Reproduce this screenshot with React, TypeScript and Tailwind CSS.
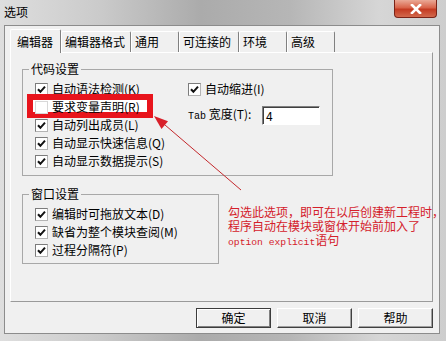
import React from "react";

const CJK = "font-['Noto_Sans_CJK_SC',sans-serif]";

const TABS = [
  { label: "编辑器", w: "w-[51px]" },
  { label: "编辑器格式", w: "w-[70px]" },
  { label: "通用", w: "w-[48px]" },
  { label: "可连接的", w: "w-[60px]" },
  { label: "环境", w: "w-[48px]" },
  { label: "高级", w: "w-[48px]" },
];

function Check({ checked = true, faint = false }: { checked?: boolean; faint?: boolean }) {
  return (
    <span
      className={`flex h-[13px] w-[13px] shrink-0 items-center justify-center border bg-white ${
        faint
          ? "border-[#d8d8d8]"
          : "border-t-[#7c7c7c] border-l-[#7c7c7c] border-r-[#b4b4b4] border-b-[#b4b4b4]"
      }`}
    >
      {checked && (
        <svg width="9" height="9" viewBox="0 0 9 9">
          <path d="M1 4.2 L3.4 6.8 L8 1.6" fill="none" stroke="#111" strokeWidth="2" />
        </svg>
      )}
    </span>
  );
}

function Row({ label, checked = true, faint = false, lift = false }: { label: string; checked?: boolean; faint?: boolean; lift?: boolean }) {
  return (
    <div className={`flex h-[18px] items-center gap-[4px] ${lift ? "relative z-[2]" : ""}`}>
      <Check checked={checked} faint={faint} />
      <span className="whitespace-nowrap text-[12px] leading-[14px]">{label}</span>
    </div>
  );
}

function Btn({ label, primary = false }: { label: string; primary?: boolean }) {
  return (
    <button
      type="button"
      className={`flex h-[20px] w-[75px] items-center justify-center border text-[12px] leading-[14px] ${
        primary
          ? "border-[#3c3c3c] bg-[#f0f0f0] shadow-[inset_1px_1px_0_#ffffff,inset_-1px_-1px_0_#808080]"
          : "border-t-white border-l-white border-r-[#404040] border-b-[#404040] bg-[#f0f0f0] shadow-[inset_-1px_-1px_0_#a0a0a0]"
      }`}
    >
      {label}
    </button>
  );
}

export default function App() {
  return (
    <div
      className={`relative flex h-[341px] w-[446px] flex-col overflow-hidden bg-[linear-gradient(90deg,#dedede_0%,#cbcbcb_22%,#ababab_45%,#b6b6b6_65%,#d6d6d6_85%,#cdcdcd_100%)] text-black ${CJK}`}
    >
      {/* title bar */}
      <div className="flex h-[25px] shrink-0 items-start">
        <span className="ml-[4px] mt-[5px] text-[12px] leading-[14px]">选项</span>
        <button
          type="button"
          className="ml-auto mr-[9px] flex h-[18px] w-[43px] items-center justify-center rounded-b-[4px] border border-t-0 border-[#7a2317] bg-[linear-gradient(180deg,#eaa996_0%,#d9644a_45%,#c43b22_55%,#d2694d_100%)]"
        >
          <svg width="12" height="10" viewBox="0 0 12 10">
            <path d="M2 1 L10 9 M10 1 L2 9" stroke="#fff" strokeWidth="2.6" strokeLinecap="square" />
          </svg>
        </button>
      </div>

      {/* client area */}
      <div className="mb-[7px] ml-[4px] mr-[6px] flex flex-1 flex-col border border-[#8c8c8c] bg-[#f0f0f0]">
        {/* tabs */}
        <div className="relative z-10 -mb-[1px] ml-[5px] mt-[3px] flex h-[24px] items-end">
          {TABS.map((t, i) => (
            <div
              key={t.label}
              className={`flex shrink-0 items-center rounded-t-[2px] border border-b-0 border-t-white border-l-white border-r-[#808080] bg-[#f0f0f0] text-[12px] leading-[14px] ${t.w} ${
                i === 0 ? "h-[24px] pl-[6px]" : "mb-[1px] h-[21px] pl-[3px]"
              }`}
            >
              {t.label}
            </div>
          ))}
        </div>

        {/* tab page */}
        <div className="ml-[5px] h-[250px] w-[423px] border border-t-white border-l-white border-r-[#9a9a9a] border-b-[#9a9a9a] pl-[11px]">
          <fieldset className="mt-[9px] h-[114px] w-[311px] border border-[#a8a8a8]">
            <legend className="ml-[6px] px-[2px] text-[12px] leading-[14px]">代码设置</legend>
            <div className="mt-[4px] flex">
              <div className="w-[165px] pl-[12px]">
                <Row label="自动语法检测(K)" />
                <Row label="要求变量声明(R)" checked={false} faint lift />
                <Row label="自动列出成员(L)" />
                <Row label="自动显示快速信息(Q)" />
                <Row label="自动显示数据提示(S)" />
              </div>
              <div>
                <Row label="自动缩进(I)" />
                <div className="mt-[8px] flex h-[19px] items-center">
                  <span className="w-[74px] whitespace-nowrap text-[12px] leading-[14px]">
                    <span className="font-['Liberation_Mono',monospace] text-[10px]">Tab</span> 宽度(T):
                  </span>
                  <div className="flex h-[19px] w-[58px] items-center border border-t-[#808080] border-l-[#808080] border-r-white border-b-white bg-white pl-[3px] text-[12px] leading-[14px] shadow-[inset_1px_1px_0_#404040]">
                    4
                  </div>
                </div>
              </div>
            </div>
          </fieldset>

          <fieldset className="mt-[11px] h-[77px] w-[197px] border border-[#a8a8a8]">
            <legend className="ml-[6px] px-[2px] text-[12px] leading-[14px]">窗口设置</legend>
            <div className="mt-[4px] pl-[12px]">
              <Row label="编辑时可拖放文本(D)" />
              <Row label="缺省为整个模块查阅(M)" />
              <Row label="过程分隔符(P)" />
            </div>
          </fieldset>
        </div>

        {/* buttons */}
        <div className="mr-[6px] mt-[6px] flex justify-end gap-[6px]">
          <Btn label="确定" primary />
          <Btn label="取消" />
          <Btn label="帮助" />
        </div>
      </div>

      {/* annotation: red highlight box */}
      <div className="absolute left-[27px] top-[94px] z-[1] h-[24px] w-[126px] border-[6px] border-[#e8141c] bg-white" />

      {/* annotation: arrow */}
      <svg className="pointer-events-none absolute left-0 top-0 z-[3]" width="446" height="341" viewBox="0 0 446 341">
        <line x1="158" y1="119" x2="241" y2="190" stroke="#c4282c" strokeWidth="1" />
        <polygon points="154,116 168,121.3 161.5,128.9" fill="#d8202a" />
      </svg>

      {/* annotation: note */}
      <div className="absolute left-[228px] top-[205px] z-[3] whitespace-nowrap text-[12px] leading-[14px] text-[#d4202a]">
        勾选此选项，即可在以后创建新工程时，
        <br />
        程序自动在模块或窗体开始前加入了
        <br />
        <span className="font-['Liberation_Mono',monospace] text-[9.7px]">option explicit</span>语句
      </div>
    </div>
  );
}
